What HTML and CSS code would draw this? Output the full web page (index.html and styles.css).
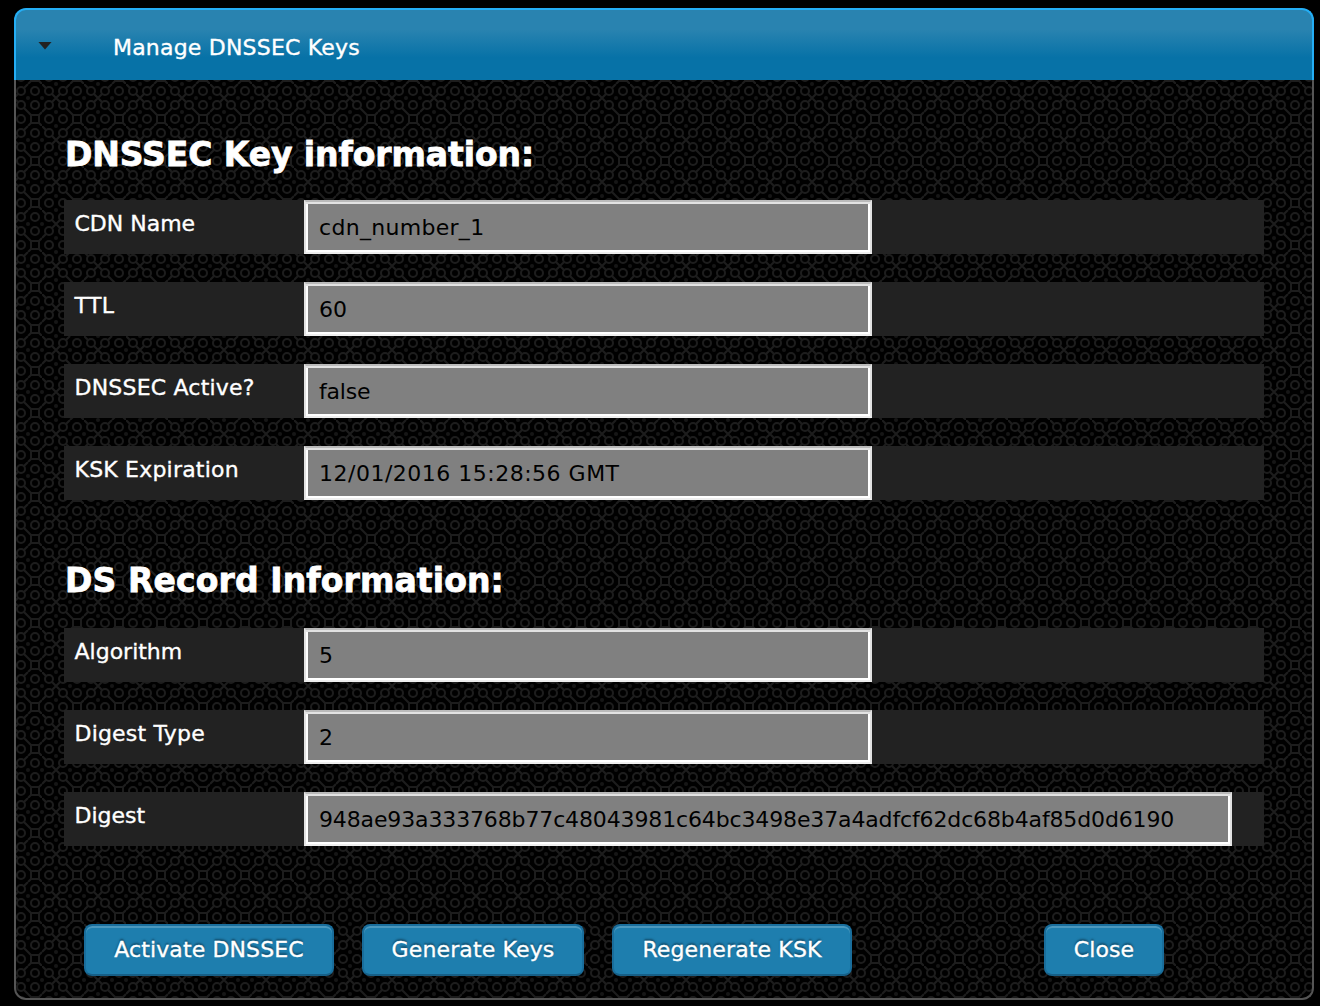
FILE: index.html
```html
<!DOCTYPE html>
<html lang="en">
<head>
<meta charset="utf-8">
<title>Manage DNSSEC Keys</title>
<link rel="stylesheet" href="styles.css">
</head>
<body>
<main class="panel">
  <header class="panel-header">
    <span class="arrow"></span>
    <span class="title">Manage DNSSEC Keys</span>
  </header>
  <div class="panel-body">
    <h2 class="key-heading">DNSSEC Key information:</h2>
    <div class="fields">
      <div class="row"><label class="l-cdn">CDN Name</label><div class="value"><span class="v-cdn">cdn_number_1</span></div></div>
      <div class="row"><label class="l-ttl">TTL</label><div class="value"><span>60</span></div></div>
      <div class="row"><label class="l-active">DNSSEC Active?</label><div class="value"><span class="v-false">false</span></div></div>
      <div class="row"><label class="l-ksk">KSK Expiration</label><div class="value"><span class="v-date">12/01/2016 15:28:56 GMT</span></div></div>
    </div>
    <h2 class="ds-heading">DS Record Information:</h2>
    <div class="fields">
      <div class="row"><label class="l-alg">Algorithm</label><div class="value"><span>5</span></div></div>
      <div class="row"><label class="l-dtype">Digest Type</label><div class="value"><span>2</span></div></div>
      <div class="row"><label class="l-digest">Digest</label><div class="value wide"><span class="v-digest">948ae93a333768b77c48043981c64bc3498e37a4adfcf62dc68b4af85d0d6190</span></div></div>
    </div>
    <div class="actions">
      <button class="activate"><span>Activate DNSSEC</span></button>
      <button class="generate"><span>Generate Keys</span></button>
      <button class="regenerate"><span>Regenerate KSK</span></button>
      <button class="close"><span>Close</span></button>
    </div>
  </div>
</main>
</body>
</html>
```

FILE: styles.css
```css
* { box-sizing: border-box; }
body {
  margin: 0;
  height: 1006px;
  padding: 8px 6px 6px 14px;
  background: #000;
  color: #fff;
  font: 22px/28px Verdana, "DejaVu Sans", sans-serif;
  overflow: hidden;
}
.panel { width: 1300px; height: 992px; }
.panel-header {
  display: flex;
  align-items: center;
  height: 72px;
  padding: 6px 0 0 22px;
  border: 2px solid #24aef5;
  border-bottom: 0;
  border-radius: 12px 12px 0 0;
  background: linear-gradient(#2983b0 0, #2983b0 28%, #0772a7 68%, #0772a7 100%);
}
.arrow {
  width: 14px;
  height: 8px;
  margin-top: -5px;
  background: #222;
  clip-path: polygon(0 0, 100% 0, 50% 100%);
}
.title { margin-left: 61px; letter-spacing: .2px; white-space: nowrap; }
.title, label, button { -webkit-text-stroke: .35px #fff; }
.panel-body {
  height: 920px;
  padding: 51px 48px 0;
  border: 2px solid #555;
  border-top: 0;
  border-radius: 0 0 12px 12px;
  background-color: #000;
  /* 42px tile of linked rings */
  background-image: url("data:image/svg+xml,%3Csvg xmlns='http://www.w3.org/2000/svg' width='42' height='42'%3E%3Cg fill='none' stroke='%231d1d1d' stroke-width='2'%3E%3Ccircle cx='7' cy='7' r='4'/%3E%3Ccircle cx='21' cy='7' r='4'/%3E%3Ccircle cx='35' cy='7' r='4'/%3E%3Ccircle cx='7' cy='21' r='4'/%3E%3Ccircle cx='21' cy='21' r='4'/%3E%3Ccircle cx='35' cy='21' r='4'/%3E%3Ccircle cx='7' cy='35' r='4'/%3E%3Ccircle cx='21' cy='35' r='4'/%3E%3Crect x='31' y='31' width='8' height='8'/%3E%3Cpath d='M10 10L18 18M18 10L10 18M24 24L31 31M39 39L42 42M0 0L4 4M39 31L42 28M0 28L4 24M31 39L28 42M28 0L24 4'/%3E%3C/g%3E%3Cg fill='%23161616'%3E%3Ccircle cx='28' cy='14' r='2'/%3E%3Ccircle cx='14' cy='28' r='2'/%3E%3Ccircle cx='0' cy='14' r='2'/%3E%3Ccircle cx='42' cy='14' r='2'/%3E%3Ccircle cx='14' cy='0' r='2'/%3E%3Ccircle cx='14' cy='42' r='2'/%3E%3C/g%3E%3C/svg%3E");
  background-position: -16px -80px;
  background-origin: padding-box;
}
h2 { margin: 0; font-size: 33px; line-height: 48px; white-space: nowrap; -webkit-text-stroke: .8px #fff; }
.fields { display: grid; gap: 28px; }
.key-heading { padding-left: 1px; margin-bottom: 21px; letter-spacing: -.08px; }
.ds-heading { padding-left: 1px; margin: 57px 0 23px; letter-spacing: .12px; }
.row { display: flex; height: 54px; background: #222; }
label { width: 240px; padding: 10px 0 0 10.5px; white-space: nowrap; }
.l-ttl { letter-spacing: .4px; }
.l-active, .l-ksk, .l-dtype { letter-spacing: .2px; }
.value {
  width: 568px;
  padding: 12px 13px 0;
  border: 2px solid;
  border-color: #bababa #e2e2e2 #eee #e2e2e2;
  box-shadow: inset 0 2px #e2e2e2, inset 0 0 0 2px #fff;
  background: #808080;
  color: #000;
  white-space: nowrap;
}
.wide { width: 928px; }
.v-cdn { letter-spacing: .3px; }
.v-false { letter-spacing: -.2px; }
.v-date { letter-spacing: .5px; }
.v-digest { letter-spacing: -.135px; }
.actions { display: flex; gap: 28px; margin: 78px 100px 0 20px; }
button {
  height: 52px;
  padding: 0;
  border: 2px solid #196d9b;
  border-bottom-color: #165f87;
  border-radius: 8px;
  background: #1e7eae;
  box-shadow: inset 0 2px #4b98be;
  color: #fff;
  font: inherit;
  letter-spacing: .13px;
  text-shadow: 0 -2px 2px #124b69;
  white-space: nowrap;
}
.activate { width: 250px; }
.generate { width: 222px; }
.regenerate { width: 240px; }
.close { width: 120px; margin-left: auto; }
```
